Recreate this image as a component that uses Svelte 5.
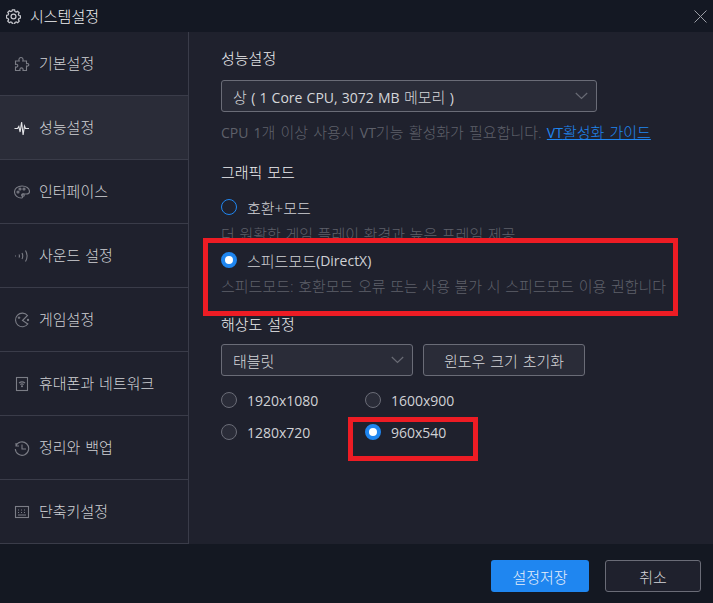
<script>
  const menu = [
    { label: '기본설정', icon: 'puzzle' },
    { label: '성능설정', icon: 'pulse', active: true },
    { label: '인터페이스', icon: 'palette' },
    { label: '사운드 설정', icon: 'sound' },
    { label: '게임설정', icon: 'game' },
    { label: '휴대폰과 네트워크', icon: 'phone' },
    { label: '정리와 백업', icon: 'history' },
    { label: '단축키설정', icon: 'keyboard' }
  ];

  const resolutions = [
    { label: '1920x1080' },
    { label: '1600x900' },
    { label: '1280x720' },
    { label: '960x540', checked: true }
  ];
</script>

<div class="window">
  <header class="titlebar">
    <svg class="gear" width="15" height="15" viewBox="0 0 16 16" fill="none" stroke="#c9cad0" stroke-width="1.3">
      <path d="M6.800 1h2.400l.4 1.700 1.300.6 1.500-.9 1.700 1.700-.9 1.500.6 1.300 1.700.4v2.400l-1.700.4-.6 1.300.9 1.500-1.700 1.700-1.500-.9-1.300.6-.4 1.700H6.800l-.4-1.700-1.300-.6-1.500.9-1.700-1.700.9-1.500-.6-1.300-1.700-.4V6.800l1.700-.4.6-1.300-.9-1.500 1.700-1.700 1.500.9 1.300-.6z" />
      <circle cx="8" cy="8" r="2.600" />
    </svg>
    <span class="title">시스템설정</span>
    <svg class="close" width="13" height="13" viewBox="0 0 13 13" stroke="#9b9da5" stroke-width="1">
      <path d="M.5.5l12 12M12.500.5l-12 12" />
    </svg>
  </header>

  <div class="body">
    <nav class="sidebar">
      {#each menu as item}
        <div class="item" class:active={item.active}>
          <svg class="icon" width="16" height="16" viewBox="0 0 16 16" fill="none" stroke={item.active ? '#e4e5e8' : '#7b7d86'} stroke-width="1.1">
            {#if item.icon === 'puzzle'}
              <path d="M1.500 5h3.700c-.9-2 .4-3.500 1.800-3.500s2.700 1.500 1.800 3.500h3.700v2.600c1.500-.4 2.300.3 2.300 1.200s-.8 1.600-2.300 1.200v4.500H9c.5-1.800-.5-2.600-1.500-2.600s-2 .8-1.500 2.600H1.500v-3.500c1.400.5 2.300-.3 2.300-1.300s-.9-1.800-2.300-1.300z" />
            {:else if item.icon === 'pulse'}
              <path d="M.5 8.500h3l1.300-2 1.300 5.500 1.500-10 1.500 13 1.400-9 1 2.500h3.500" />
            {:else if item.icon === 'palette'}
              <path d="M8 2C3.800 2 .5 4.500.5 8c0 3.500 3.400 6 6.800 6 1.700 0 1.500-1.300 1-2-.6-1 0-2 1.200-2h2.800c1.900 0 3.200-.9 3.200-2.500C15.500 4.300 12 2 8 2z" />
              <circle cx="4" cy="8" r="1" /><circle cx="6" cy="5" r="1" /><circle cx="10" cy="5" r="1" /><circle cx="9" cy="11" r="1.300" />
            {:else if item.icon === 'sound'}
              <path d="M1 8h1M5 6.500c.6 1 .6 2 0 3M8 5c1 2 1 4 0 6M11.500 2.500c2 3.500 2 7.500 0 11" />
            {:else if item.icon === 'game'}
              <path d="M13.500 3.500A6.800 6.800 0 1 0 13.800 12L8.500 8.500z" />
              <path d="M5 4.500v2.500M3.800 5.800h2.500" />
              <circle cx="14" cy="8" r=".6" />
            {:else if item.icon === 'phone'}
              <rect x="2.500" y="1.500" width="11" height="13" />
              <path d="M5 7c1.800-1.300 4.200-1.300 6 0M6.300 8.500c1-.7 2.400-.7 3.400 0" />
              <circle cx="8" cy="10.300" r=".5" />
            {:else if item.icon === 'history'}
              <path d="M2 3v3h3M1.800 6A6.700 6.700 0 1 1 1.300 9" />
              <path d="M8 4.500V9h4" />
            {:else}
              <rect x="1.500" y="2.500" width="13" height="11" />
              <path d="M4 6h1M7 6h1M10 6h1M4 8.500h1M7 8.500h1M10 8.500h1M4 11h8" />
            {/if}
          </svg>
          <span>{item.label}</span>
        </div>
      {/each}
    </nav>

    <main class="content">
      <h2 class="first">성능설정</h2>
      <div class="select wide">
        <span>상 <span class="lat">( 1 Core CPU, 3072 MB</span> 메모리 <span class="lat">)</span></span>
        <svg width="13" height="8" viewBox="0 0 13 8" fill="none" stroke="#696b75" stroke-width="1.2"><path d="M.8 1l5.700 5.500L12.200 1" /></svg>
      </div>
      <p class="hint cpu"><span class="lat">CPU 1</span>개 이상 사용시 <span class="lat">VT</span>기능 활성화가 필요합니다. <a href="#guide"><span class="lat">VT</span>활성화 가이드</a></p>

      <h2 class="graphic">그래픽 모드</h2>
      <label class="radio mode-a"><i class="dot ring"></i>호환+모드</label>
      <p class="hint under-a">더 원활한 게임 플레이 환경과 높은 프레임 제공</p>
      <label class="radio mode-b"><i class="dot on"></i>스피드모드<span class="lat">(DirectX)</span></label>
      <p class="hint under-b">스피드모드: 호환모드 오류 또는 사용 불가 시 스피드모드 이용 권합니다</p>

      <h2 class="res">해상도 설정</h2>
      <div class="controls">
        <div class="select narrow">
          <span>태블릿</span>
          <svg width="13" height="8" viewBox="0 0 13 8" fill="none" stroke="#696b75" stroke-width="1.2"><path d="M.8 1l5.700 5.500L12.200 1" /></svg>
        </div>
        <button class="reset">윈도우 크기 초기화</button>
      </div>
      <div class="grid">
        {#each resolutions as r}
          <label class="radio lat"><i class="dot" class:on={r.checked}></i>{r.label}</label>
        {/each}
      </div>

      <div class="mark mark-mode"></div>
      <div class="mark mark-res"></div>
    </main>
  </div>

  <footer class="footer">
    <button class="save">설정저장</button>
    <button class="cancel">취소</button>
  </footer>
</div>

<style>
  :global(body) {
    margin: 0;
    background: #1f212d;
  }

  .window {
    width: 713px;
    height: 603px;
    display: flex;
    flex-direction: column;
    overflow: hidden;
    font-family: "Open Sans", "Noto Sans CJK KR", sans-serif;
    font-size: 15px;
    font-weight: 300;
    color: #d5d6da;
    background: #1f212d;
  }

  .lat {
    font-size: 14px;
    font-weight: 400;
  }

  .titlebar {
    height: 32px;
    flex: none;
    display: flex;
    align-items: center;
    padding: 0 6px;
    background: #141823;
    color: #f0f0f2;
  }

  .gear {
    margin-right: 9px;
  }

  .title {
    flex: 1;
    position: relative;
    top: -1px;
  }

  .body {
    flex: 1;
    display: flex;
    min-height: 0;
  }

  .sidebar {
    width: 188px;
    flex: none;
    border-right: 1px solid #3a3c49;
  }

  .item {
    height: 63px;
    display: flex;
    align-items: center;
    gap: 9px;
    padding-left: 14px;
    border-bottom: 1px solid #3a3c49;
    color: #d0d1d5;
  }

  .item span {
    margin-top: -2px;
    word-spacing: 1px;
  }

  .item.active {
    background: #2a2c38;
  }

  .icon {
    flex: none;
  }

  .content {
    position: relative;
    flex: 1;
    padding: 16px 0 0 32px;
  }

  h2 {
    margin: 0;
    font-size: 15px;
    font-weight: 300;
    line-height: 20px;
    color: #eeeef0;
  }

  .select {
    height: 30px;
    display: flex;
    align-items: center;
    justify-content: space-between;
    padding: 0 8px 0 11px;
    background: #2a2c38;
    border: 1px solid #6a6c77;
    border-radius: 3px;
    color: #d5d6da;
    word-spacing: .5px;
  }

  .wide {
    width: 355px;
    margin-top: 12px;
  }

  .narrow {
    width: 171px;
  }

  .hint {
    margin: 0;
    line-height: 20px;
    color: #5e606a;
    white-space: nowrap;
    word-spacing: .7px;
  }

  .cpu {
    margin-top: 10px;
    word-spacing: 1.3px;
  }

  .hint a {
    color: #1f86f0;
  }

  .graphic {
    margin-top: 19px;
    word-spacing: 1px;
  }

  .radio {
    display: flex;
    align-items: center;
    height: 20px;
    color: #d0d1d5;
  }

  .mode-a {
    margin-top: 15px;
  }

  .under-a {
    margin-top: 7px;
  }

  .mode-b {
    margin-top: 6px;
  }

  .under-b {
    margin-top: 6px;
  }

  .res {
    margin-top: 18px;
    word-spacing: 1px;
  }

  .dot {
    width: 16px;
    height: 16px;
    box-sizing: border-box;
    margin-right: 10px;
    border: 1px solid #6a6c77;
    border-radius: 50%;
    background: #2a2c38;
    flex: none;
  }

  .dot.ring {
    border: 1.5px solid #1f86f0;
    background: transparent;
  }

  .dot.on {
    border: 4px solid #1f86f0;
    background: #fff;
  }

  .controls {
    display: flex;
    gap: 10px;
    margin-top: 10px;
  }

  .reset {
    width: 162px;
    height: 32px;
    padding: 0;
    font: inherit;
    word-spacing: 1px;
    color: #d5d6da;
    background: #2a2c38;
    border: 1px solid #6a6c77;
    border-radius: 3px;
  }

  .grid {
    display: grid;
    grid-template-columns: 144px 144px;
    row-gap: 12px;
    margin-top: 14px;
  }

  .mark {
    position: absolute;
    box-sizing: border-box;
    border: 5px solid #ed1c24;
  }

  .mark-mode {
    left: 14px;
    top: 206px;
    width: 475px;
    height: 78px;
  }

  .mark-res {
    left: 159px;
    top: 385px;
    width: 130px;
    height: 44px;
  }

  .footer {
    height: 59px;
    flex: none;
    display: flex;
    justify-content: flex-end;
    gap: 16px;
    padding: 16px 12px 0 0;
    box-sizing: border-box;
    background: #141822;
  }

  .footer button {
    height: 32px;
    padding: 0;
    font: inherit;
    border-radius: 3px;
  }

  .save {
    width: 98px;
    color: #e8effa;
    background: #1f86f0;
    border: none;
  }

  .cancel {
    width: 96px;
    color: #d5d6da;
    background: #1f212d;
    border: 1px solid #6a6c77;
  }
</style>
